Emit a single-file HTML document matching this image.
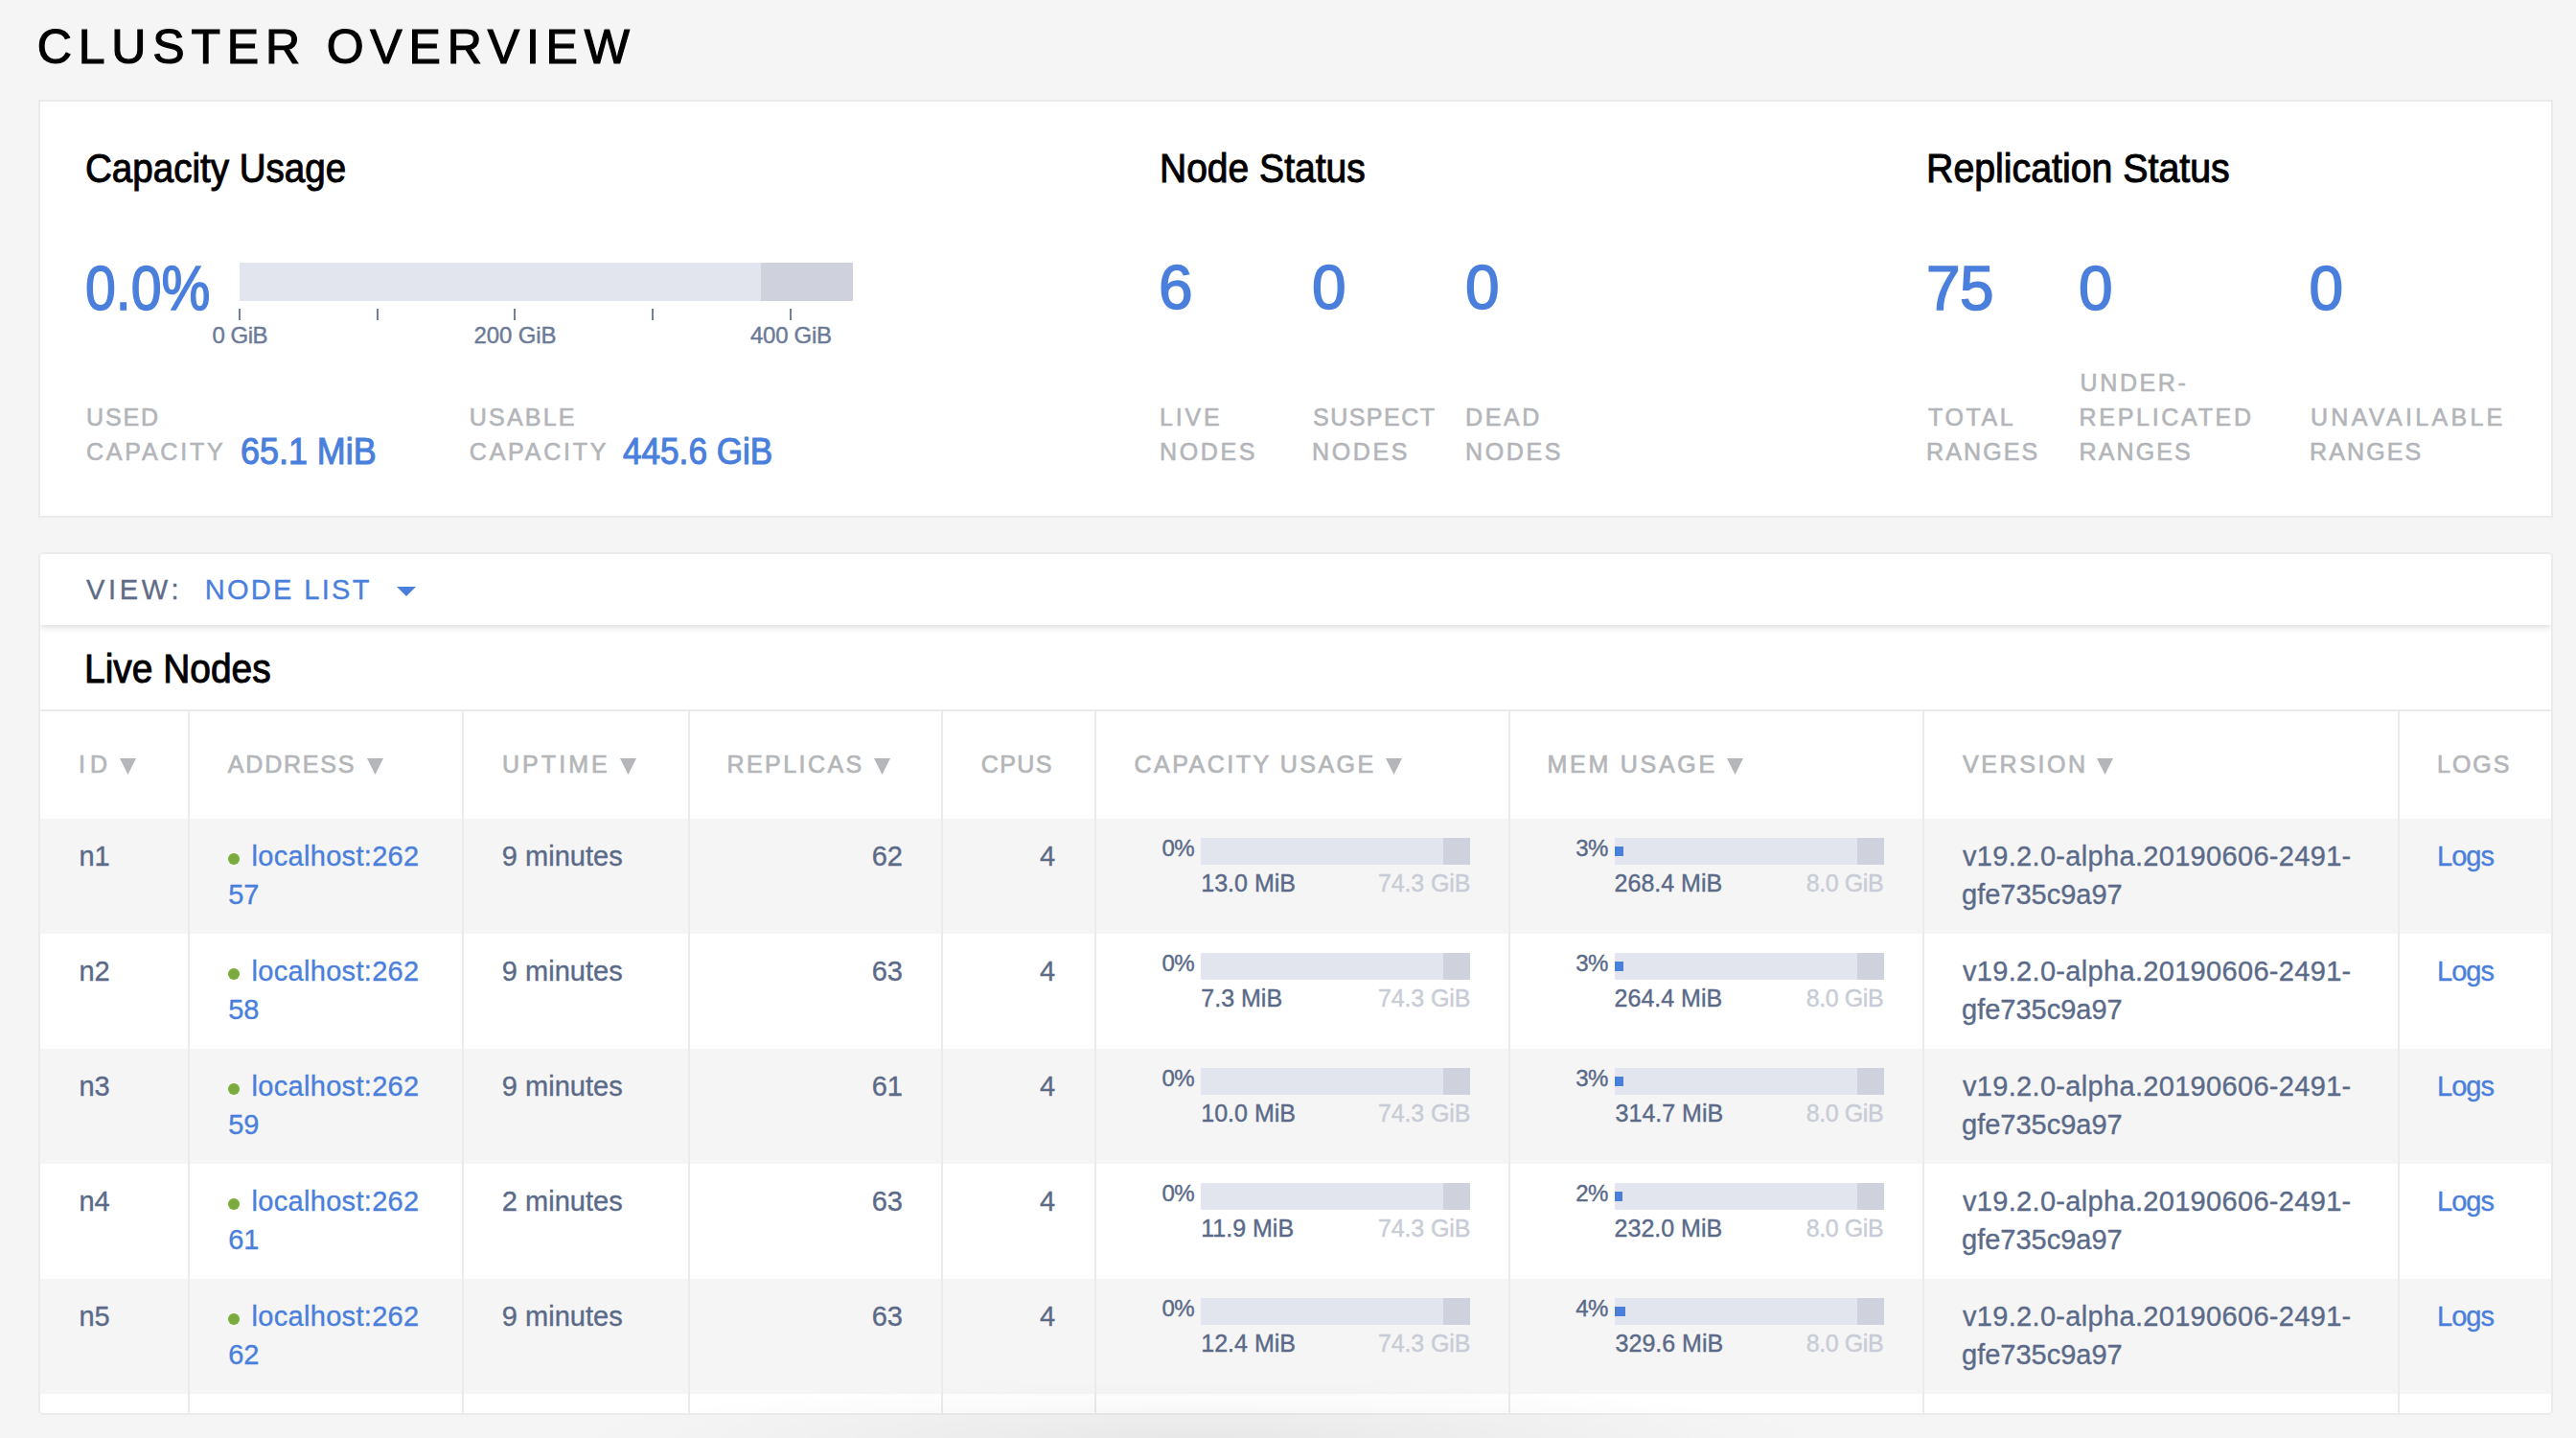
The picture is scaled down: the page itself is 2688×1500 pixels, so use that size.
<!DOCTYPE html>
<html><head><meta charset="utf-8"><title>Cluster Overview</title>
<style>
html,body{margin:0;padding:0;}
body{width:2688px;height:1500px;overflow:hidden;background:#f5f5f5;position:relative;font-family:"Liberation Sans",sans-serif;}
.t{position:absolute;white-space:nowrap;}
</style></head><body>
<div style="position:absolute;left:40px;top:104px;width:2620px;height:432px;border:2px solid #ebebeb;background:#fff"></div>
<div style="position:absolute;left:40px;top:576px;width:2624px;height:900px;box-sizing:border-box;border:2px solid #ebebeb;border-radius:5px;background:#fff;overflow:hidden">
<div style="position:absolute;left:0;top:0;width:2620px;height:74px;background:#fff;box-shadow:0 2px 7px rgba(0,0,0,0.15)"></div></div>
<div style="position:absolute;left:42px;top:740px;width:2620px;height:2px;background:#ebebeb"></div>
<div style="position:absolute;left:250px;top:274px;width:640px;height:40px;background:#e2e5ee"></div>
<div style="position:absolute;left:794px;top:274px;width:96px;height:40px;background:#cfd2dc"></div>
<div style="position:absolute;left:249px;top:322px;width:2px;height:12px;background:#72809b"></div><div style="position:absolute;left:393px;top:322px;width:2px;height:12px;background:#72809b"></div><div style="position:absolute;left:536px;top:322px;width:2px;height:12px;background:#72809b"></div><div style="position:absolute;left:680px;top:322px;width:2px;height:12px;background:#72809b"></div><div style="position:absolute;left:824px;top:322px;width:2px;height:12px;background:#72809b"></div>
<svg style="position:absolute;left:414px;top:612px" width="20" height="10" viewBox="0 0 20 10"><polygon points="0,0 20,0 10,10" fill="#4a7fdc"/></svg>
<div style="position:absolute;left:42px;top:854px;width:2620px;height:120px;background:#f5f5f5;"></div><div style="position:absolute;left:238px;top:890px;width:12px;height:12px;border-radius:50%;background:#7aab3c"></div><div style="position:absolute;left:1253px;top:874px;width:281px;height:28px;background:#e2e5ee;"></div><div style="position:absolute;left:1506px;top:874px;width:28px;height:28px;background:#cfd2dc;"></div><div style="position:absolute;left:1685px;top:874px;width:281px;height:28px;background:#e2e5ee;"></div><div style="position:absolute;left:1938px;top:874px;width:28px;height:28px;background:#cfd2dc;"></div><div style="position:absolute;left:1685px;top:883px;width:9px;height:10px;background:#4a7fdc;"></div><div style="position:absolute;left:238px;top:1010px;width:12px;height:12px;border-radius:50%;background:#7aab3c"></div><div style="position:absolute;left:1253px;top:994px;width:281px;height:28px;background:#e2e5ee;"></div><div style="position:absolute;left:1506px;top:994px;width:28px;height:28px;background:#cfd2dc;"></div><div style="position:absolute;left:1685px;top:994px;width:281px;height:28px;background:#e2e5ee;"></div><div style="position:absolute;left:1938px;top:994px;width:28px;height:28px;background:#cfd2dc;"></div><div style="position:absolute;left:1685px;top:1003px;width:9px;height:10px;background:#4a7fdc;"></div><div style="position:absolute;left:42px;top:1094px;width:2620px;height:120px;background:#f5f5f5;"></div><div style="position:absolute;left:238px;top:1130px;width:12px;height:12px;border-radius:50%;background:#7aab3c"></div><div style="position:absolute;left:1253px;top:1114px;width:281px;height:28px;background:#e2e5ee;"></div><div style="position:absolute;left:1506px;top:1114px;width:28px;height:28px;background:#cfd2dc;"></div><div style="position:absolute;left:1685px;top:1114px;width:281px;height:28px;background:#e2e5ee;"></div><div style="position:absolute;left:1938px;top:1114px;width:28px;height:28px;background:#cfd2dc;"></div><div style="position:absolute;left:1685px;top:1123px;width:9px;height:10px;background:#4a7fdc;"></div><div style="position:absolute;left:238px;top:1250px;width:12px;height:12px;border-radius:50%;background:#7aab3c"></div><div style="position:absolute;left:1253px;top:1234px;width:281px;height:28px;background:#e2e5ee;"></div><div style="position:absolute;left:1506px;top:1234px;width:28px;height:28px;background:#cfd2dc;"></div><div style="position:absolute;left:1685px;top:1234px;width:281px;height:28px;background:#e2e5ee;"></div><div style="position:absolute;left:1938px;top:1234px;width:28px;height:28px;background:#cfd2dc;"></div><div style="position:absolute;left:1685px;top:1243px;width:8px;height:10px;background:#4a7fdc;"></div><div style="position:absolute;left:42px;top:1334px;width:2620px;height:120px;background:#f5f5f5;"></div><div style="position:absolute;left:238px;top:1370px;width:12px;height:12px;border-radius:50%;background:#7aab3c"></div><div style="position:absolute;left:1253px;top:1354px;width:281px;height:28px;background:#e2e5ee;"></div><div style="position:absolute;left:1506px;top:1354px;width:28px;height:28px;background:#cfd2dc;"></div><div style="position:absolute;left:1685px;top:1354px;width:281px;height:28px;background:#e2e5ee;"></div><div style="position:absolute;left:1938px;top:1354px;width:28px;height:28px;background:#cfd2dc;"></div><div style="position:absolute;left:1685px;top:1363px;width:11px;height:10px;background:#4a7fdc;"></div>
<div style="position:absolute;left:196px;top:742px;width:2px;height:732px;background:#ebebeb"></div><div style="position:absolute;left:482px;top:742px;width:2px;height:732px;background:#ebebeb"></div><div style="position:absolute;left:718px;top:742px;width:2px;height:732px;background:#ebebeb"></div><div style="position:absolute;left:982px;top:742px;width:2px;height:732px;background:#ebebeb"></div><div style="position:absolute;left:1142px;top:742px;width:2px;height:732px;background:#ebebeb"></div><div style="position:absolute;left:1574px;top:742px;width:2px;height:732px;background:#ebebeb"></div><div style="position:absolute;left:2006px;top:742px;width:2px;height:732px;background:#ebebeb"></div><div style="position:absolute;left:2502px;top:742px;width:2px;height:732px;background:#ebebeb"></div>
<svg style="position:absolute;left:125px;top:791px" width="17" height="17" viewBox="0 0 17 17"><polygon points="0,0 17,0 8.5,17" fill="#b4b6b9"/></svg><svg style="position:absolute;left:383px;top:791px" width="17" height="17" viewBox="0 0 17 17"><polygon points="0,0 17,0 8.5,17" fill="#b4b6b9"/></svg><svg style="position:absolute;left:647px;top:791px" width="17" height="17" viewBox="0 0 17 17"><polygon points="0,0 17,0 8.5,17" fill="#b4b6b9"/></svg><svg style="position:absolute;left:912px;top:791px" width="17" height="17" viewBox="0 0 17 17"><polygon points="0,0 17,0 8.5,17" fill="#b4b6b9"/></svg><svg style="position:absolute;left:1446px;top:791px" width="17" height="17" viewBox="0 0 17 17"><polygon points="0,0 17,0 8.5,17" fill="#b4b6b9"/></svg><svg style="position:absolute;left:1802px;top:791px" width="17" height="17" viewBox="0 0 17 17"><polygon points="0,0 17,0 8.5,17" fill="#b4b6b9"/></svg><svg style="position:absolute;left:2188px;top:791px" width="17" height="17" viewBox="0 0 17 17"><polygon points="0,0 17,0 8.5,17" fill="#b4b6b9"/></svg>
<div class="t" style="left:38.80px;top:24.27px;font-size:50px;line-height:50px;font-weight:400;color:#000;letter-spacing:6.823px;-webkit-text-stroke:1.2px #000">CLUSTER OVERVIEW</div><div class="t" style="left:89.16px;top:155.15px;font-size:42px;line-height:42px;font-weight:400;color:#000;letter-spacing:0.000px;-webkit-text-stroke:1.0px #000;transform:scaleX(0.9177);transform-origin:0 0">Capacity Usage</div><div class="t" style="left:88.81px;top:268.82px;font-size:64px;line-height:64px;font-weight:400;color:#4a7fdc;letter-spacing:0.000px;-webkit-text-stroke:1.5px #4a7fdc;transform:scaleX(0.8946);transform-origin:0 0">0.0%</div><div class="t" style="left:90.00px;top:422.84px;font-size:25px;line-height:25px;font-weight:400;color:#b3b5b9;letter-spacing:1.865px;-webkit-text-stroke:0.6px #b3b5b9">USED</div><div class="t" style="left:90.00px;top:458.84px;font-size:25px;line-height:25px;font-weight:400;color:#b3b5b9;letter-spacing:2.787px;-webkit-text-stroke:0.6px #b3b5b9">CAPACITY</div><div class="t" style="left:250.66px;top:452.43px;font-size:38px;line-height:38px;font-weight:400;color:#4a7fdc;letter-spacing:0.000px;-webkit-text-stroke:1.1px #4a7fdc;transform:scaleX(0.9444);transform-origin:0 0">65.1 MiB</div><div class="t" style="left:489.80px;top:422.84px;font-size:25px;line-height:25px;font-weight:400;color:#b3b5b9;letter-spacing:2.204px;-webkit-text-stroke:0.6px #b3b5b9">USABLE</div><div class="t" style="left:489.80px;top:458.84px;font-size:25px;line-height:25px;font-weight:400;color:#b3b5b9;letter-spacing:2.787px;-webkit-text-stroke:0.6px #b3b5b9">CAPACITY</div><div class="t" style="left:650.30px;top:452.43px;font-size:38px;line-height:38px;font-weight:400;color:#4a7fdc;letter-spacing:0.000px;-webkit-text-stroke:1.1px #4a7fdc;transform:scaleX(0.9245);transform-origin:0 0">445.6 GiB</div><div class="t" style="left:221.50px;top:338.38px;font-size:24px;line-height:24px;font-weight:400;color:#6b7a96;letter-spacing:-0.504px;-webkit-text-stroke:0.4px #6b7a96">0 GiB</div><div class="t" style="left:494.50px;top:338.38px;font-size:24px;line-height:24px;font-weight:400;color:#6b7a96;letter-spacing:-0.118px;-webkit-text-stroke:0.4px #6b7a96">200 GiB</div><div class="t" style="left:783.00px;top:338.38px;font-size:24px;line-height:24px;font-weight:400;color:#6b7a96;letter-spacing:-0.285px;-webkit-text-stroke:0.4px #6b7a96">400 GiB</div><div class="t" style="left:1210.21px;top:155.45px;font-size:42px;line-height:42px;font-weight:400;color:#000;letter-spacing:0.000px;-webkit-text-stroke:1.0px #000;transform:scaleX(0.9289);transform-origin:0 0">Node Status</div><div class="t" style="left:1209.00px;top:268.32px;font-size:64px;line-height:64px;font-weight:400;color:#4a7fdc;letter-spacing:0.000px;-webkit-text-stroke:1.5px #4a7fdc">6</div><div class="t" style="left:1210.00px;top:422.84px;font-size:25px;line-height:25px;font-weight:400;color:#b3b5b9;letter-spacing:2.825px;-webkit-text-stroke:0.6px #b3b5b9">LIVE</div><div class="t" style="left:1210.00px;top:458.84px;font-size:25px;line-height:25px;font-weight:400;color:#b3b5b9;letter-spacing:2.618px;-webkit-text-stroke:0.6px #b3b5b9">NODES</div><div class="t" style="left:1369.00px;top:268.32px;font-size:64px;line-height:64px;font-weight:400;color:#4a7fdc;letter-spacing:0.000px;-webkit-text-stroke:1.5px #4a7fdc">0</div><div class="t" style="left:1370.00px;top:422.84px;font-size:25px;line-height:25px;font-weight:400;color:#b3b5b9;letter-spacing:1.482px;-webkit-text-stroke:0.6px #b3b5b9">SUSPECT</div><div class="t" style="left:1369.00px;top:458.84px;font-size:25px;line-height:25px;font-weight:400;color:#b3b5b9;letter-spacing:2.618px;-webkit-text-stroke:0.6px #b3b5b9">NODES</div><div class="t" style="left:1529.00px;top:268.32px;font-size:64px;line-height:64px;font-weight:400;color:#4a7fdc;letter-spacing:0.000px;-webkit-text-stroke:1.5px #4a7fdc">0</div><div class="t" style="left:1529.00px;top:422.84px;font-size:25px;line-height:25px;font-weight:400;color:#b3b5b9;letter-spacing:2.600px;-webkit-text-stroke:0.6px #b3b5b9">DEAD</div><div class="t" style="left:1529.00px;top:458.84px;font-size:25px;line-height:25px;font-weight:400;color:#b3b5b9;letter-spacing:2.618px;-webkit-text-stroke:0.6px #b3b5b9">NODES</div><div class="t" style="left:2010.19px;top:155.45px;font-size:42px;line-height:42px;font-weight:400;color:#000;letter-spacing:0.000px;-webkit-text-stroke:1.0px #000;transform:scaleX(0.9357);transform-origin:0 0">Replication Status</div><div class="t" style="left:2010.00px;top:268.82px;font-size:64px;line-height:64px;font-weight:400;color:#4a7fdc;letter-spacing:-0.594px;-webkit-text-stroke:1.5px #4a7fdc">75</div><div class="t" style="left:2169.00px;top:268.82px;font-size:64px;line-height:64px;font-weight:400;color:#4a7fdc;letter-spacing:0.000px;-webkit-text-stroke:1.5px #4a7fdc">0</div><div class="t" style="left:2409.40px;top:268.82px;font-size:64px;line-height:64px;font-weight:400;color:#4a7fdc;letter-spacing:0.000px;-webkit-text-stroke:1.5px #4a7fdc">0</div><div class="t" style="left:2012.00px;top:422.84px;font-size:25px;line-height:25px;font-weight:400;color:#b3b5b9;letter-spacing:2.600px;-webkit-text-stroke:0.6px #b3b5b9">TOTAL</div><div class="t" style="left:2010.00px;top:458.84px;font-size:25px;line-height:25px;font-weight:400;color:#b3b5b9;letter-spacing:2.119px;-webkit-text-stroke:0.6px #b3b5b9">RANGES</div><div class="t" style="left:2170.60px;top:386.84px;font-size:25px;line-height:25px;font-weight:400;color:#b3b5b9;letter-spacing:2.600px;-webkit-text-stroke:0.6px #b3b5b9">UNDER-</div><div class="t" style="left:2169.60px;top:422.84px;font-size:25px;line-height:25px;font-weight:400;color:#b3b5b9;letter-spacing:2.703px;-webkit-text-stroke:0.6px #b3b5b9">REPLICATED</div><div class="t" style="left:2169.60px;top:458.84px;font-size:25px;line-height:25px;font-weight:400;color:#b3b5b9;letter-spacing:2.119px;-webkit-text-stroke:0.6px #b3b5b9">RANGES</div><div class="t" style="left:2411.00px;top:422.84px;font-size:25px;line-height:25px;font-weight:400;color:#b3b5b9;letter-spacing:3.308px;-webkit-text-stroke:0.6px #b3b5b9">UNAVAILABLE</div><div class="t" style="left:2410.00px;top:458.84px;font-size:25px;line-height:25px;font-weight:400;color:#b3b5b9;letter-spacing:2.119px;-webkit-text-stroke:0.6px #b3b5b9">RANGES</div><div class="t" style="left:90.00px;top:601.45px;font-size:29px;line-height:29px;font-weight:400;color:#5f6c87;letter-spacing:3.702px;-webkit-text-stroke:0.35px #5f6c87">VIEW:</div><div class="t" style="left:213.70px;top:601.45px;font-size:29px;line-height:29px;font-weight:400;color:#4a7fdc;letter-spacing:2.329px;-webkit-text-stroke:0.35px #4a7fdc">NODE LIST</div><div class="t" style="left:88.02px;top:677.05px;font-size:42px;line-height:42px;font-weight:400;color:#000;letter-spacing:0.000px;-webkit-text-stroke:1.0px #000;transform:scaleX(0.9266);transform-origin:0 0">Live Nodes</div><div class="t" style="left:82.00px;top:785.34px;font-size:25px;line-height:25px;font-weight:400;color:#b4b6b9;letter-spacing:5.054px;-webkit-text-stroke:0.7px #b4b6b9">ID</div><div class="t" style="left:237.80px;top:785.34px;font-size:25px;line-height:25px;font-weight:400;color:#b4b6b9;letter-spacing:1.802px;-webkit-text-stroke:0.7px #b4b6b9">ADDRESS</div><div class="t" style="left:524.00px;top:785.34px;font-size:25px;line-height:25px;font-weight:400;color:#b4b6b9;letter-spacing:3.046px;-webkit-text-stroke:0.7px #b4b6b9">UPTIME</div><div class="t" style="left:758.50px;top:785.34px;font-size:25px;line-height:25px;font-weight:400;color:#b4b6b9;letter-spacing:2.431px;-webkit-text-stroke:0.7px #b4b6b9">REPLICAS</div><div class="t" style="left:1023.80px;top:785.34px;font-size:25px;line-height:25px;font-weight:400;color:#b4b6b9;letter-spacing:1.406px;-webkit-text-stroke:0.7px #b4b6b9">CPUS</div><div class="t" style="left:1183.50px;top:785.34px;font-size:25px;line-height:25px;font-weight:400;color:#b4b6b9;letter-spacing:2.503px;-webkit-text-stroke:0.7px #b4b6b9">CAPACITY USAGE</div><div class="t" style="left:1614.50px;top:785.34px;font-size:25px;line-height:25px;font-weight:400;color:#b4b6b9;letter-spacing:2.735px;-webkit-text-stroke:0.7px #b4b6b9">MEM USAGE</div><div class="t" style="left:2048.00px;top:785.34px;font-size:25px;line-height:25px;font-weight:400;color:#b4b6b9;letter-spacing:2.588px;-webkit-text-stroke:0.7px #b4b6b9">VERSION</div><div class="t" style="left:2543.00px;top:785.34px;font-size:25px;line-height:25px;font-weight:400;color:#b4b6b9;letter-spacing:2.002px;-webkit-text-stroke:0.7px #b4b6b9">LOGS</div><div class="t" style="left:82.40px;top:879.45px;font-size:29px;line-height:29px;font-weight:400;color:#5a6a88;letter-spacing:0.000px;-webkit-text-stroke:0.35px #5a6a88">n1</div><div class="t" style="left:262.60px;top:879.45px;font-size:29px;line-height:29px;font-weight:400;color:#4a7fdc;letter-spacing:0.302px;-webkit-text-stroke:0.35px #4a7fdc">localhost:262</div><div class="t" style="left:238.20px;top:919.45px;font-size:29px;line-height:29px;font-weight:400;color:#4a7fdc;letter-spacing:0.000px;-webkit-text-stroke:0.35px #4a7fdc">57</div><div class="t" style="left:523.70px;top:879.45px;font-size:29px;line-height:29px;font-weight:400;color:#5a6a88;letter-spacing:0.046px;-webkit-text-stroke:0.35px #5a6a88">9 minutes</div><div class="t" style="left:909.67px;top:879.45px;font-size:29px;line-height:29px;font-weight:400;color:#5a6a88;letter-spacing:0.000px;-webkit-text-stroke:0.35px #5a6a88">62</div><div class="t" style="left:1085.00px;top:879.45px;font-size:29px;line-height:29px;font-weight:400;color:#5a6a88;letter-spacing:0.000px;-webkit-text-stroke:0.35px #5a6a88">4</div><div class="t" style="left:1212.45px;top:873.38px;font-size:24px;line-height:24px;font-weight:400;color:#5a6a88;letter-spacing:-0.500px;-webkit-text-stroke:0.4px #5a6a88">0%</div><div class="t" style="left:1253.30px;top:908.84px;font-size:25px;line-height:25px;font-weight:400;color:#5a6a88;letter-spacing:0.000px;-webkit-text-stroke:0.4px #5a6a88">13.0 MiB</div><div class="t" style="left:1438.00px;top:908.84px;font-size:25px;line-height:25px;font-weight:400;color:#c8ccd6;letter-spacing:-0.129px;-webkit-text-stroke:0.4px #c8ccd6">74.3 GiB</div><div class="t" style="left:1644.15px;top:873.38px;font-size:24px;line-height:24px;font-weight:400;color:#5a6a88;letter-spacing:-0.500px;-webkit-text-stroke:0.4px #5a6a88">3%</div><div class="t" style="left:1684.60px;top:908.84px;font-size:25px;line-height:25px;font-weight:400;color:#5a6a88;letter-spacing:0.000px;-webkit-text-stroke:0.4px #5a6a88">268.4 MiB</div><div class="t" style="left:1884.70px;top:908.84px;font-size:25px;line-height:25px;font-weight:400;color:#c8ccd6;letter-spacing:-0.400px;-webkit-text-stroke:0.4px #c8ccd6">8.0 GiB</div><div class="t" style="left:2048.00px;top:879.45px;font-size:29px;line-height:29px;font-weight:400;color:#5a6a88;letter-spacing:0.319px;-webkit-text-stroke:0.35px #5a6a88">v19.2.0-alpha.20190606-2491-</div><div class="t" style="left:2047.00px;top:918.95px;font-size:29px;line-height:29px;font-weight:400;color:#5a6a88;letter-spacing:0.000px;-webkit-text-stroke:0.35px #5a6a88">gfe735c9a97</div><div class="t" style="left:2543.00px;top:879.45px;font-size:29px;line-height:29px;font-weight:400;color:#4a7fdc;letter-spacing:-1.000px;-webkit-text-stroke:0.35px #4a7fdc">Logs</div><div class="t" style="left:82.40px;top:999.45px;font-size:29px;line-height:29px;font-weight:400;color:#5a6a88;letter-spacing:0.000px;-webkit-text-stroke:0.35px #5a6a88">n2</div><div class="t" style="left:262.60px;top:999.45px;font-size:29px;line-height:29px;font-weight:400;color:#4a7fdc;letter-spacing:0.302px;-webkit-text-stroke:0.35px #4a7fdc">localhost:262</div><div class="t" style="left:238.20px;top:1039.45px;font-size:29px;line-height:29px;font-weight:400;color:#4a7fdc;letter-spacing:0.000px;-webkit-text-stroke:0.35px #4a7fdc">58</div><div class="t" style="left:523.70px;top:999.45px;font-size:29px;line-height:29px;font-weight:400;color:#5a6a88;letter-spacing:0.046px;-webkit-text-stroke:0.35px #5a6a88">9 minutes</div><div class="t" style="left:909.67px;top:999.45px;font-size:29px;line-height:29px;font-weight:400;color:#5a6a88;letter-spacing:0.000px;-webkit-text-stroke:0.35px #5a6a88">63</div><div class="t" style="left:1085.00px;top:999.45px;font-size:29px;line-height:29px;font-weight:400;color:#5a6a88;letter-spacing:0.000px;-webkit-text-stroke:0.35px #5a6a88">4</div><div class="t" style="left:1212.45px;top:993.38px;font-size:24px;line-height:24px;font-weight:400;color:#5a6a88;letter-spacing:-0.500px;-webkit-text-stroke:0.4px #5a6a88">0%</div><div class="t" style="left:1253.30px;top:1028.84px;font-size:25px;line-height:25px;font-weight:400;color:#5a6a88;letter-spacing:0.000px;-webkit-text-stroke:0.4px #5a6a88">7.3 MiB</div><div class="t" style="left:1438.00px;top:1028.84px;font-size:25px;line-height:25px;font-weight:400;color:#c8ccd6;letter-spacing:-0.129px;-webkit-text-stroke:0.4px #c8ccd6">74.3 GiB</div><div class="t" style="left:1644.15px;top:993.38px;font-size:24px;line-height:24px;font-weight:400;color:#5a6a88;letter-spacing:-0.500px;-webkit-text-stroke:0.4px #5a6a88">3%</div><div class="t" style="left:1684.60px;top:1028.84px;font-size:25px;line-height:25px;font-weight:400;color:#5a6a88;letter-spacing:0.000px;-webkit-text-stroke:0.4px #5a6a88">264.4 MiB</div><div class="t" style="left:1884.70px;top:1028.84px;font-size:25px;line-height:25px;font-weight:400;color:#c8ccd6;letter-spacing:-0.400px;-webkit-text-stroke:0.4px #c8ccd6">8.0 GiB</div><div class="t" style="left:2048.00px;top:999.45px;font-size:29px;line-height:29px;font-weight:400;color:#5a6a88;letter-spacing:0.319px;-webkit-text-stroke:0.35px #5a6a88">v19.2.0-alpha.20190606-2491-</div><div class="t" style="left:2047.00px;top:1038.95px;font-size:29px;line-height:29px;font-weight:400;color:#5a6a88;letter-spacing:0.000px;-webkit-text-stroke:0.35px #5a6a88">gfe735c9a97</div><div class="t" style="left:2543.00px;top:999.45px;font-size:29px;line-height:29px;font-weight:400;color:#4a7fdc;letter-spacing:-1.000px;-webkit-text-stroke:0.35px #4a7fdc">Logs</div><div class="t" style="left:82.40px;top:1119.45px;font-size:29px;line-height:29px;font-weight:400;color:#5a6a88;letter-spacing:0.000px;-webkit-text-stroke:0.35px #5a6a88">n3</div><div class="t" style="left:262.60px;top:1119.45px;font-size:29px;line-height:29px;font-weight:400;color:#4a7fdc;letter-spacing:0.302px;-webkit-text-stroke:0.35px #4a7fdc">localhost:262</div><div class="t" style="left:238.20px;top:1159.45px;font-size:29px;line-height:29px;font-weight:400;color:#4a7fdc;letter-spacing:0.000px;-webkit-text-stroke:0.35px #4a7fdc">59</div><div class="t" style="left:523.70px;top:1119.45px;font-size:29px;line-height:29px;font-weight:400;color:#5a6a88;letter-spacing:0.046px;-webkit-text-stroke:0.35px #5a6a88">9 minutes</div><div class="t" style="left:909.67px;top:1119.45px;font-size:29px;line-height:29px;font-weight:400;color:#5a6a88;letter-spacing:0.000px;-webkit-text-stroke:0.35px #5a6a88">61</div><div class="t" style="left:1085.00px;top:1119.45px;font-size:29px;line-height:29px;font-weight:400;color:#5a6a88;letter-spacing:0.000px;-webkit-text-stroke:0.35px #5a6a88">4</div><div class="t" style="left:1212.45px;top:1113.38px;font-size:24px;line-height:24px;font-weight:400;color:#5a6a88;letter-spacing:-0.500px;-webkit-text-stroke:0.4px #5a6a88">0%</div><div class="t" style="left:1253.30px;top:1148.84px;font-size:25px;line-height:25px;font-weight:400;color:#5a6a88;letter-spacing:0.000px;-webkit-text-stroke:0.4px #5a6a88">10.0 MiB</div><div class="t" style="left:1438.00px;top:1148.84px;font-size:25px;line-height:25px;font-weight:400;color:#c8ccd6;letter-spacing:-0.129px;-webkit-text-stroke:0.4px #c8ccd6">74.3 GiB</div><div class="t" style="left:1644.15px;top:1113.38px;font-size:24px;line-height:24px;font-weight:400;color:#5a6a88;letter-spacing:-0.500px;-webkit-text-stroke:0.4px #5a6a88">3%</div><div class="t" style="left:1685.60px;top:1148.84px;font-size:25px;line-height:25px;font-weight:400;color:#5a6a88;letter-spacing:0.000px;-webkit-text-stroke:0.4px #5a6a88">314.7 MiB</div><div class="t" style="left:1884.70px;top:1148.84px;font-size:25px;line-height:25px;font-weight:400;color:#c8ccd6;letter-spacing:-0.400px;-webkit-text-stroke:0.4px #c8ccd6">8.0 GiB</div><div class="t" style="left:2048.00px;top:1119.45px;font-size:29px;line-height:29px;font-weight:400;color:#5a6a88;letter-spacing:0.319px;-webkit-text-stroke:0.35px #5a6a88">v19.2.0-alpha.20190606-2491-</div><div class="t" style="left:2047.00px;top:1158.95px;font-size:29px;line-height:29px;font-weight:400;color:#5a6a88;letter-spacing:0.000px;-webkit-text-stroke:0.35px #5a6a88">gfe735c9a97</div><div class="t" style="left:2543.00px;top:1119.45px;font-size:29px;line-height:29px;font-weight:400;color:#4a7fdc;letter-spacing:-1.000px;-webkit-text-stroke:0.35px #4a7fdc">Logs</div><div class="t" style="left:82.40px;top:1239.45px;font-size:29px;line-height:29px;font-weight:400;color:#5a6a88;letter-spacing:0.000px;-webkit-text-stroke:0.35px #5a6a88">n4</div><div class="t" style="left:262.60px;top:1239.45px;font-size:29px;line-height:29px;font-weight:400;color:#4a7fdc;letter-spacing:0.302px;-webkit-text-stroke:0.35px #4a7fdc">localhost:262</div><div class="t" style="left:238.20px;top:1279.45px;font-size:29px;line-height:29px;font-weight:400;color:#4a7fdc;letter-spacing:0.000px;-webkit-text-stroke:0.35px #4a7fdc">61</div><div class="t" style="left:523.70px;top:1239.45px;font-size:29px;line-height:29px;font-weight:400;color:#5a6a88;letter-spacing:0.046px;-webkit-text-stroke:0.35px #5a6a88">2 minutes</div><div class="t" style="left:909.67px;top:1239.45px;font-size:29px;line-height:29px;font-weight:400;color:#5a6a88;letter-spacing:0.000px;-webkit-text-stroke:0.35px #5a6a88">63</div><div class="t" style="left:1085.00px;top:1239.45px;font-size:29px;line-height:29px;font-weight:400;color:#5a6a88;letter-spacing:0.000px;-webkit-text-stroke:0.35px #5a6a88">4</div><div class="t" style="left:1212.45px;top:1233.38px;font-size:24px;line-height:24px;font-weight:400;color:#5a6a88;letter-spacing:-0.500px;-webkit-text-stroke:0.4px #5a6a88">0%</div><div class="t" style="left:1253.30px;top:1268.84px;font-size:25px;line-height:25px;font-weight:400;color:#5a6a88;letter-spacing:0.000px;-webkit-text-stroke:0.4px #5a6a88">11.9 MiB</div><div class="t" style="left:1438.00px;top:1268.84px;font-size:25px;line-height:25px;font-weight:400;color:#c8ccd6;letter-spacing:-0.129px;-webkit-text-stroke:0.4px #c8ccd6">74.3 GiB</div><div class="t" style="left:1644.15px;top:1233.38px;font-size:24px;line-height:24px;font-weight:400;color:#5a6a88;letter-spacing:-0.500px;-webkit-text-stroke:0.4px #5a6a88">2%</div><div class="t" style="left:1684.60px;top:1268.84px;font-size:25px;line-height:25px;font-weight:400;color:#5a6a88;letter-spacing:0.000px;-webkit-text-stroke:0.4px #5a6a88">232.0 MiB</div><div class="t" style="left:1884.70px;top:1268.84px;font-size:25px;line-height:25px;font-weight:400;color:#c8ccd6;letter-spacing:-0.400px;-webkit-text-stroke:0.4px #c8ccd6">8.0 GiB</div><div class="t" style="left:2048.00px;top:1239.45px;font-size:29px;line-height:29px;font-weight:400;color:#5a6a88;letter-spacing:0.319px;-webkit-text-stroke:0.35px #5a6a88">v19.2.0-alpha.20190606-2491-</div><div class="t" style="left:2047.00px;top:1278.95px;font-size:29px;line-height:29px;font-weight:400;color:#5a6a88;letter-spacing:0.000px;-webkit-text-stroke:0.35px #5a6a88">gfe735c9a97</div><div class="t" style="left:2543.00px;top:1239.45px;font-size:29px;line-height:29px;font-weight:400;color:#4a7fdc;letter-spacing:-1.000px;-webkit-text-stroke:0.35px #4a7fdc">Logs</div><div class="t" style="left:82.40px;top:1359.45px;font-size:29px;line-height:29px;font-weight:400;color:#5a6a88;letter-spacing:0.000px;-webkit-text-stroke:0.35px #5a6a88">n5</div><div class="t" style="left:262.60px;top:1359.45px;font-size:29px;line-height:29px;font-weight:400;color:#4a7fdc;letter-spacing:0.302px;-webkit-text-stroke:0.35px #4a7fdc">localhost:262</div><div class="t" style="left:238.20px;top:1399.45px;font-size:29px;line-height:29px;font-weight:400;color:#4a7fdc;letter-spacing:0.000px;-webkit-text-stroke:0.35px #4a7fdc">62</div><div class="t" style="left:523.70px;top:1359.45px;font-size:29px;line-height:29px;font-weight:400;color:#5a6a88;letter-spacing:0.046px;-webkit-text-stroke:0.35px #5a6a88">9 minutes</div><div class="t" style="left:909.67px;top:1359.45px;font-size:29px;line-height:29px;font-weight:400;color:#5a6a88;letter-spacing:0.000px;-webkit-text-stroke:0.35px #5a6a88">63</div><div class="t" style="left:1085.00px;top:1359.45px;font-size:29px;line-height:29px;font-weight:400;color:#5a6a88;letter-spacing:0.000px;-webkit-text-stroke:0.35px #5a6a88">4</div><div class="t" style="left:1212.45px;top:1353.38px;font-size:24px;line-height:24px;font-weight:400;color:#5a6a88;letter-spacing:-0.500px;-webkit-text-stroke:0.4px #5a6a88">0%</div><div class="t" style="left:1253.30px;top:1388.84px;font-size:25px;line-height:25px;font-weight:400;color:#5a6a88;letter-spacing:0.000px;-webkit-text-stroke:0.4px #5a6a88">12.4 MiB</div><div class="t" style="left:1438.00px;top:1388.84px;font-size:25px;line-height:25px;font-weight:400;color:#c8ccd6;letter-spacing:-0.129px;-webkit-text-stroke:0.4px #c8ccd6">74.3 GiB</div><div class="t" style="left:1644.15px;top:1353.38px;font-size:24px;line-height:24px;font-weight:400;color:#5a6a88;letter-spacing:-0.500px;-webkit-text-stroke:0.4px #5a6a88">4%</div><div class="t" style="left:1685.60px;top:1388.84px;font-size:25px;line-height:25px;font-weight:400;color:#5a6a88;letter-spacing:0.000px;-webkit-text-stroke:0.4px #5a6a88">329.6 MiB</div><div class="t" style="left:1884.70px;top:1388.84px;font-size:25px;line-height:25px;font-weight:400;color:#c8ccd6;letter-spacing:-0.400px;-webkit-text-stroke:0.4px #c8ccd6">8.0 GiB</div><div class="t" style="left:2048.00px;top:1359.45px;font-size:29px;line-height:29px;font-weight:400;color:#5a6a88;letter-spacing:0.319px;-webkit-text-stroke:0.35px #5a6a88">v19.2.0-alpha.20190606-2491-</div><div class="t" style="left:2047.00px;top:1398.95px;font-size:29px;line-height:29px;font-weight:400;color:#5a6a88;letter-spacing:0.000px;-webkit-text-stroke:0.35px #5a6a88">gfe735c9a97</div><div class="t" style="left:2543.00px;top:1359.45px;font-size:29px;line-height:29px;font-weight:400;color:#4a7fdc;letter-spacing:-1.000px;-webkit-text-stroke:0.35px #4a7fdc">Logs</div>
<div style="position:absolute;left:600px;top:1400px;width:1300px;height:100px;background:radial-gradient(ellipse 50% 60% at 50% 100%, rgba(0,0,0,0.055), rgba(0,0,0,0.02) 60%, rgba(0,0,0,0) 100%)"></div>
</body></html>
